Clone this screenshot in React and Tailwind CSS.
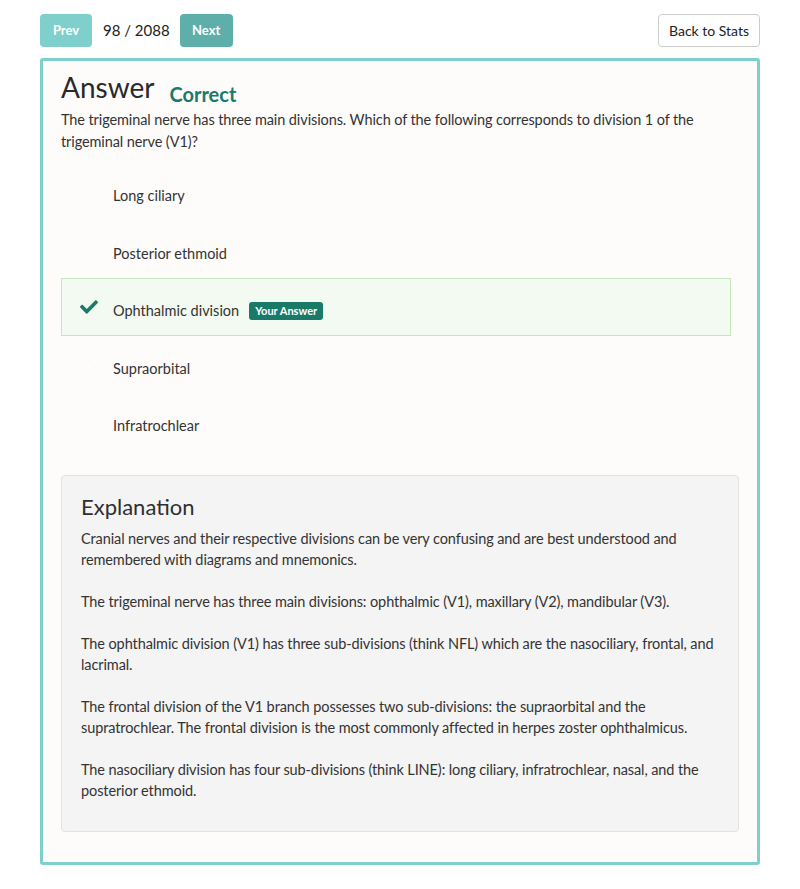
import React from "react";
import { FaCheck } from "react-icons/fa";

const options = [
  { text: "Long ciliary" },
  { text: "Posterior ethmoid" },
  { text: "Ophthalmic division", correct: true },
  { text: "Supraorbital" },
  { text: "Infratrochlear" },
];

const paras = [
  "Cranial nerves and their respective divisions can be very confusing and are best understood and remembered with diagrams and mnemonics.",
  "The trigeminal nerve has three main divisions: ophthalmic (V1), maxillary (V2), mandibular (V3).",
  "The ophthalmic division (V1) has three sub-divisions (think NFL) which are the nasociliary, frontal, and lacrimal.",
  "The frontal division of the V1 branch possesses two sub-divisions: the supraorbital and the supratrochlear. The frontal division is the most commonly affected in herpes zoster ophthalmicus.",
  "The nasociliary division has four sub-divisions (think LINE): long ciliary, infratrochlear, nasal, and the posterior ethmoid.",
];

export default function App() {
  return (
    <div className="bg-white min-h-[889px] text-[#333] font-['Lato',sans-serif]">
      <div className="px-[40px] pt-[14px]">
        <div className="flex items-center justify-between">
          <div className="flex items-center">
            <button className="h-[33px] w-[52px] rounded-[4px] bg-[#7fcfcc] text-white font-bold text-[13px]">Prev</button>
            <span className="ml-[11px] mr-[10px] text-[15px] text-[#222]">98 / 2088</span>
            <button className="h-[33px] w-[53px] rounded-[4px] bg-[#5eaeaa] text-white font-bold text-[13px]">Next</button>
          </div>
          <button className="h-[33px] w-[102px] rounded-[4px] border border-[#ccc] bg-white text-[14px] text-[#222]">Back to Stats</button>
        </div>
        <div className="mt-[11px] border-[3px] border-[#7fcfcc] rounded-[3px] bg-[#fdfcfb] pl-[18px] pr-[18px] pt-[7px] pb-[30px]">
          <div className="flex items-end">
            <h1 className="text-[28px] leading-[38px] text-[#2a2a2a]">Answer</h1>
            <span className="ml-[15px] text-[20px] font-bold text-[#1a7a6a] leading-[30px] mb-[-3px]">Correct</span>
          </div>
          <p className="mt-[3px] text-[14.5px] leading-[22px] pr-[20px] tracking-[-0.1px]">
            The trigeminal nerve has three main divisions. Which of the following corresponds to division 1 of the trigeminal nerve (V1)?
          </p>
          <div className="mt-[10px] mr-[8px]">
            {options.map((o) => (
              <div
                key={o.text}
                className={
                  "flex items-center h-[57.5px] pt-[9px] border " +
                  (o.correct ? "bg-[#f3faf1] border-[#c5e6bd]" : "border-transparent")
                }
              >
                <FaCheck className={"ml-[16px] mb-[8px] w-[22px] h-[18px] " + (o.correct ? "text-[#1a7a6a]" : "text-[#fdfdfd]")} />
                <span className="ml-[13px] text-[14.5px]">{o.text}</span>
                {o.correct && (
                  <span className="ml-[10px] rounded-[3px] bg-[#1a7a6a] px-[6px] py-[2px] text-[11px] font-bold text-white leading-[14px]">
                    Your Answer
                  </span>
                )}
              </div>
            ))}
          </div>
          <div className="mt-[24px] bg-[#f4f4f4] border border-[#e2e2e2] rounded-[4px] px-[19px] pt-[16px] pb-[30px]">
            <h2 className="text-[22px] leading-[30px] text-[#2f2f2f]">Explanation</h2>
            <div className="mt-[6px] text-[14.5px] leading-[21px] tracking-[-0.1px]">
              {paras.map((p, i) => (
                <p key={i} className={i > 0 ? "mt-[21px]" : ""}>{p}</p>
              ))}
            </div>
          </div>
        </div>
      </div>
    </div>
  );
}
